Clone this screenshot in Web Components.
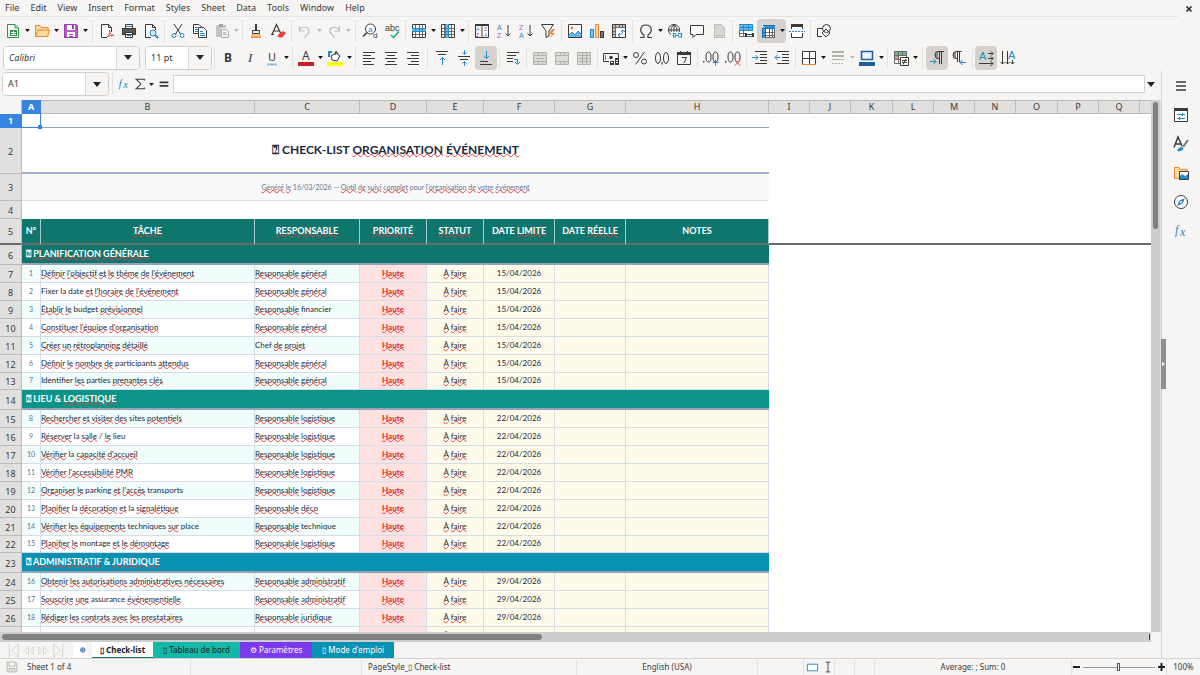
<!DOCTYPE html>
<html lang="en">
<head>
<meta charset="utf-8">
<title>Check-list - Calc</title>
<style>
html, body { margin: 0; height: 100%; }
body { font: 9px/12px "Noto Sans", "Open Sans", sans-serif; color: #3a3a38; background: #f6f5f4; overflow: hidden; }
</style>
</head>
<body>
<calc-window>
  <menu-bar slot="menu"></menu-bar>
  <tool-bar slot="tools" label="Standard">
    <tool-button icon="new" label="New" menu></tool-button>
    <tool-button icon="open" label="Open" menu></tool-button>
    <tool-button icon="save" label="Save" menu></tool-button>
    <tool-sep wide></tool-sep>
    <tool-button icon="pdf" label="Export as PDF"></tool-button>
    <tool-button icon="print" label="Print"></tool-button>
    <tool-button icon="preview" label="Print Preview"></tool-button>
    <tool-sep></tool-sep>
    <tool-button icon="cut" label="Cut"></tool-button>
    <tool-button icon="copy" label="Copy"></tool-button>
    <tool-button icon="paste" label="Paste" menu off></tool-button>
    <tool-sep></tool-sep>
    <tool-button icon="brush" label="Clone Formatting"></tool-button>
    <tool-button icon="clear" label="Clear Formatting"></tool-button>
    <tool-sep></tool-sep>
    <tool-button icon="undo" label="Undo" menu off></tool-button>
    <tool-button icon="redo" label="Redo" menu off></tool-button>
    <tool-sep wide></tool-sep>
    <tool-button icon="find" label="Find and Replace"></tool-button>
    <tool-button icon="spell" label="Spelling"></tool-button>
    <tool-sep></tool-sep>
    <tool-button icon="row" label="Row" menu></tool-button>
    <tool-button icon="column" label="Column" menu></tool-button>
    <tool-sep></tool-sep>
    <tool-button icon="sort" label="Sort"></tool-button>
    <tool-button icon="asc" label="Sort Ascending"></tool-button>
    <tool-button icon="desc" label="Sort Descending"></tool-button>
    <tool-button icon="filter" label="AutoFilter"></tool-button>
    <tool-sep></tool-sep>
    <tool-button icon="image" label="Insert Image"></tool-button>
    <tool-button icon="chart" label="Insert Chart"></tool-button>
    <tool-button icon="pivot" label="Insert Pivot Table"></tool-button>
    <tool-sep></tool-sep>
    <tool-button icon="omega" label="Insert Special Character" menu></tool-button>
    <tool-button icon="link" label="Insert Hyperlink"></tool-button>
    <tool-button icon="comment" label="Insert Comment"></tool-button>
    <tool-button icon="page" label="Headers and Footers" off></tool-button>
    <tool-sep></tool-sep>
    <tool-button icon="area" label="Define Print Area"></tool-button>
    <tool-button icon="freeze" label="Freeze Rows and Columns" menu pressed></tool-button>
    <tool-button icon="split" label="Split Window"></tool-button>
    <tool-sep></tool-sep>
    <tool-button icon="shapes" label="Show Draw Functions"></tool-button>
  </tool-bar>
  <tool-bar slot="tools" label="Formatting">
    <combo-box label="Font Name" value="Calibri" size="name"></combo-box>
    <combo-box label="Font Size" value="11 pt" size="points"></combo-box>
    <tool-sep></tool-sep>
    <tool-button icon="bold" label="Bold"></tool-button>
    <tool-button icon="italic" label="Italic"></tool-button>
    <tool-button icon="underline" label="Underline" menu></tool-button>
    <tool-sep></tool-sep>
    <tool-button icon="fontcolor" label="Font Color" menu></tool-button>
    <tool-button icon="fill" label="Background Color" menu></tool-button>
    <tool-sep></tool-sep>
    <tool-button icon="left" label="Align Left"></tool-button>
    <tool-button icon="center" label="Center Horizontally"></tool-button>
    <tool-button icon="right" label="Align Right"></tool-button>
    <tool-sep wide></tool-sep>
    <tool-button icon="top" label="Align Top"></tool-button>
    <tool-button icon="middle" label="Center Vertically"></tool-button>
    <tool-button icon="bottom" label="Align Bottom" pressed></tool-button>
    <tool-sep></tool-sep>
    <tool-button icon="wrap" label="Wrap Text"></tool-button>
    <tool-sep></tool-sep>
    <tool-button icon="merge" label="Merge and Center Cells" off></tool-button>
    <tool-button icon="merge2" label="Merge Cells" off></tool-button>
    <tool-button icon="merge3" label="Unmerge Cells" off></tool-button>
    <tool-sep></tool-sep>
    <tool-button icon="money" label="Format as Currency" menu></tool-button>
    <tool-button icon="percent" label="Format as Percent"></tool-button>
    <tool-button icon="number" label="Format as Number"></tool-button>
    <tool-button icon="date" label="Format as Date"></tool-button>
    <tool-sep></tool-sep>
    <tool-button icon="adddec" label="Add Decimal Place"></tool-button>
    <tool-button icon="deldec" label="Delete Decimal Place"></tool-button>
    <tool-sep></tool-sep>
    <tool-button icon="indent" label="Increase Indent"></tool-button>
    <tool-button icon="outdent" label="Decrease Indent"></tool-button>
    <tool-sep></tool-sep>
    <tool-button icon="borders" label="Borders" menu></tool-button>
    <tool-button icon="bstyle" label="Border Style" menu off></tool-button>
    <tool-button icon="bcolor" label="Border Color" menu></tool-button>
    <tool-sep></tool-sep>
    <tool-button icon="cond" label="Conditional" menu></tool-button>
    <tool-sep wide></tool-sep>
    <tool-button icon="ltr" label="Left-To-Right" pressed></tool-button>
    <tool-button icon="rtl" label="Right-To-Left"></tool-button>
    <tool-sep></tool-sep>
    <tool-button icon="horiz" label="Text direction from left to right" pressed></tool-button>
    <tool-button icon="vert" label="Text direction from top to bottom"></tool-button>
  </tool-bar>
  <formula-bar></formula-bar>
  <sheet-view></sheet-view>
  <sheet-tabs></sheet-tabs>
  <side-bar slot="side"></side-bar>
  <status-bar slot="status"></status-bar>
</calc-window>

<script>
const K = '#3a3a38', B = '#1e8bcd', G = '#797774';
const s = (c, d, w = 1) => `<path d="${d}" fill="none" stroke="${c}" stroke-width="${w}"/>`;
const f = (c, d) => `<path d="${d}" fill="${c}"/>`;
const glyph = (t, x, y, size, c, font = 'Noto Sans', extra = '') =>
  `<text x="${x}" y="${y}" font-size="${size}" fill="${c}" font-family="${font}, sans-serif" ${extra}>${t}</text>`;
const small = (t, x, y, size, c) => glyph(t, x, y, size, c, 'Liberation Sans');
const GRID = s('#6a6967', 'M1 5.5h14M1 8.5h14M1 11.5h14M4.5 2v12M8.500 2v12M11.5 2v12') + s(K, 'M1.5 1.5h13v13h-13z');
const ZEROS = `<ellipse cx="5.5" cy="7" rx="2.5" ry="5" fill="none" stroke="${K}"/><ellipse cx="12.5" cy="7" rx="2.5" ry="5" fill="none" stroke="${K}"/>` + f(K, 'M0 11h1.5v1.5H0z');

const ICONS = {
  new: f('#fff', 'M2 1h8l4 4v10H2z') + s('#309048', 'M10 1.5H2.5v13h11V5L10 1.5V5h3.5') + f('#309048', 'M5 7h7v6H5z') + s('#fff', 'M6 9.5h5M6 11.5h5M8.5 8v4'),
  open: f('#fbdb9d', 'M1 3h5l1 2h8v9H1z') + s('#ed8733', 'M1.5 13.5v-11H6l1.5 2H14V7M1.5 13.5L4 7h11.5l-2 6.5z'),
  save: f('#b160c0', 'M1 1h12l2 2v12H1z') + f('#fff', 'M4 1.5h8V7H4zM4 9h8v6H4z') + f('#9a3fb0', 'M9 2h2v4H9z') + s('#9a3fb0', 'M1.5 1.5H13l1.5 1.5v11.5h-13zM6 11.5h4M6 13.5h4'),
  pdf: f('#fff', 'M2 1h8l3 3v11H2z') + s(K, 'M12.5 9V4.500l-3-3h-7v13H8M9.5 1.5v3h3') + s('#ed3d3b', 'M8 14c3-2 3-5 2.5-7c0 4 2 5 4.5 5.500c-2-.5-5 0-7 1.5z'),
  print: f('#5a5957', 'M1 5h14v7H1z') + f('#fff', 'M4 1h8v5H4zM4 10h8v5H4z') + s(K, 'M4.5 5V1.5h7V5M1.5 5.5h13v6h-13zM4.5 9.5h7v5h-7z') + f(B, 'M5 3h6v1H5zM6 12h4v1H6z'),
  preview: f('#fff', 'M2 1h8l3 3v11H2z') + s(K, 'M12.5 7V4.5l-3-3h-7v13H8M9.5 1.5v3h3') + `<circle cx="10" cy="10" r="3" fill="#cce6f7" stroke="${B}"/>` + s(B, 'M12 12l3 3', 2),
  cut: s(K, 'M4 1l6.5 10M12 1L5.5 11') + `<circle cx="4" cy="12.5" r="2" fill="none" stroke="${B}"/><circle cx="12" cy="12.5" r="2" fill="none" stroke="${B}"/>`,
  copy: f('#fff', 'M1 1h8v10H1zM6 4h9v11H6z') + s(K, 'M6 10.5H1.5v-9H7L9.5 4M6.5 4.5h5l3 3v7h-8z') + s(B, 'M3 4.500h3M3 6.500h3M3 8.500h3M8 8.500h3M8 10.500h5M8 12.500h5'),
  paste: f('#c8c6c4', 'M2 2h10v12H2z') + f('#f2f2f1', 'M7 5h8v10H7z') + f('#a9a7a5', 'M5 1h4v3H5z') + s('#b4b2b0', 'M7.5 6.5h5l2 2v6h-7zM9 9.5h3M9 11.5h4'),
  brush: f(K, 'M7 1h2v6H7z') + s(K, 'M4.5 7.5h7v3h-7z') + f('#fbdb9d', 'M4 11h8l1 4H3z') + s('#ed8733', 'M4.5 11l-1 3.5h9l-1-3.5M6.5 12v3M9.5 12v3'),
  clear: s(K, 'M2 11.500L6.5 1.5 11 11M3.5 8h6M1 11.5h3', 1.2) + f('#ed3d3b', 'M9 11l4-3 3 2-4 4.500H9L7.500 13z'),
  undo: s('#c0bebb', 'M2.5 3v5h5M2.5 8C4 3 12 3 12 8c0 3-2 4-5 6.5', 1.2),
  redo: s('#c0bebb', 'M13.5 3v5h-5M13.5 8C12 3 4 3 4 8c0 3 2 4 5 6.5', 1.2),
  find: `<circle cx="8.5" cy="6" r="5" fill="#fff" stroke="${K}"/>` + s(K, 'M5 9.500l-4 4', 1.5) + small('a', 6, 9, 8, B) + small('d', 11, 15, 8, K),
  spell: small('abc', 1, 8, 9, K) + s('#1aab76', 'M7 12l2.5 2.5L15 8.500', 1.5),
  row: f('#fff', 'M1 1h14v14H1z') + GRID + f('#6bb6e8', 'M1 5h14v4H1z') + s(B, 'M1 5.5h14M1 8.5h14M4.5 5v4M8.5 5v4M11.5 5v4'),
  column: f('#fff', 'M1 1h14v14H1z') + GRID + f('#6bb6e8', 'M5 1h4v14H5z') + s(B, 'M5.5 1v14M8.5 1v14M5 5.5h4M5 8.5h4M5 11.5h4'),
  sort: f('#fff', 'M1 1h14v14H1z') + f(K, 'M1 1h14v2H1z') + s(K, 'M1.5 1.5h13v13h-13zM8 2v13') + small('A', 2, 8, 5, B) + small('Z', 2, 14, 5, '#a040b0') + small('Z', 10, 8, 5, '#a040b0') + small('A', 10, 14, 5, B),
  asc: small('A', 1, 7, 7, B) + small('Z', 1, 15, 7, '#b160c0') + s(K, 'M12 2v11M9.5 10.5L12 13l2.5-2.5'),
  desc: small('Z', 1, 7, 7, '#b160c0') + small('A', 1, 15, 7, B) + s(K, 'M12 2v11M9.5 10.5L12 13l2.5-2.5'),
  filter: s(K, 'M1.5 1.5h12L9 8v5l-3 1.5V8z') + f('#ed8733', 'M12 6l-3 5h3l-2 4 5-5h-3l3-4z'),
  image: f('#fff', 'M1 1h14v14H1z') + `<circle cx="5" cy="5" r="1.5" fill="#ed8733"/>` + f('#6bb6e8', 'M1 14l4-5 3 3 3-4 4 5v2H1z') + s(K, 'M1.5 1.5h13v13h-13z') + s(B, 'M1 13l4-4 3 3 3-4 4 4'),
  chart: f(B, 'M1 6h4v9H1z') + f('#fbdb9d', 'M6 2h4v13H6z') + s('#ed8733', 'M6.5 1.5h3v13h-3z') + f(K, 'M11 8h4v7h-4z') + f('#83beec', 'M2 7h2v7H2z') + f(G, 'M12 9h2v5h-2z'),
  pivot: f('#fff', 'M1 1h14v14H1z') + f('#c0bebc', 'M1 1h14v3H1zM1 1h3v14H1z') + s('#6a6967', 'M1 4.5h14M4.5 1v14M8.5 1v3M11.5 1v3M1 8.5h3M1 11.5h3') + s(K, 'M1.5 1.5h13v13h-13z') + s(B, 'M7 12c4 0 5-2 5-5M9 10l-2 2 2 2M10 9l2-2 2 2'),
  omega: s(K, 'M2 14.5h4V12C1 9 2 2 8 2s7 7 2 10v2.500h4', 1.2),
  link: `<circle cx="7" cy="7" r="5.5" fill="#fff" stroke="${K}"/>` + s(K, 'M1.5 7h11M7 1.5v11M7 1.5c-4 4-4 7 0 11M7 1.5c4 4 4 7 0 11') + f('#f6f5f4', 'M4 9h12v6H4z') + s(B, 'M9 10.5H6.5V14H9M11 10.5h3.5V14H11M8 12.300h4', 1.2),
  comment: f('#fff', 'M1 2h14v9H6l-3 4v-4H1z') + s(K, 'M1.5 2.5h13v9H7l-3 3v-3H1.5z'),
  page: f('#d9d7d5', 'M3 1h7l4 4v10H3z') + s('#c0bebb', 'M3.5 1.5H10L13.5 5v9.5h-10zM5 12.5h7'),
  area: f('#fff', 'M1 1h14v13H1z') + f('#6bb6e8', 'M1 1h14v6H1z') + s(B, 'M1 4.5h14M5.5 1v6M10.5 1v6M1 7.5h14M1.5 1.5h13v6') + s('#6a6967', 'M1.5 7v6.5h6M5.5 7v6M1 10.5h7') + f(K, 'M7 10h9v4H7z') + f('#fff', 'M9 8h5v3H9zM9 12h5v3H9z') + s(B, 'M9 13.5h5'),
  freeze: f('#fff', 'M3 3h12v12H3z') + s('#6a6967', 'M6 9.5h9M6 12.5h9M9.5 6v9M12.5 6v9M6 14.5h9M14.5 6v9') + f('#3d9ad8', 'M3 2h12v4H3zM2 3h4v12H2z') + s('#1c6fb5', 'M2 2.500h13M2.5 2v13M2 5.500h13M5.5 2v13M9.5 2v4M12.5 2v4M2 9.500h4M2 12.500h4') + s('#bfe0f5', 'M0 0l5 5M5 0L0 5M2.5 0v5'),
  split: f('#fff', 'M2 2h12v12H2z') + f(K, 'M2 1h12v3H2z') + s(K, 'M2.5 4v2M13.5 4v2M2.5 10v4.5h11V10') + `<path d="M0 8.500h16" stroke="${B}" stroke-dasharray="2 1"/>`,
  shapes: s(K, 'M6 13.5H1.5v-8h5') + `<circle cx="10.5" cy="5.5" r="4" fill="none" stroke="${K}"/>` + s(K, 'M6 10l4-4 4 4-4 4z'),
  bold: glyph('B', 4, 12, 12, K, 'Noto Sans', 'font-weight="700"'),
  italic: glyph('I', 6, 12, 13, K, 'Liberation Serif', 'font-style="italic"'),
  underline: glyph('U', 4, 11, 11, K) + s('#83beec', 'M3 14.5h10', 2),
  fontcolor: glyph('A', 4, 10, 12, K) + f('#c9211e', 'M0 12h16v4H0z'),
  fill: f('#fff', 'M6 2l6 3-3 6-6-3z') + s(K, 'M4 6l5-3 4 3-3 5-5-1zM8 5l1-4 2 3') + s(B, 'M5 2H2v5', 2) + f('#ffff00', 'M0 12h16v4H0z'),
  left: s(K, 'M2 2.5h12M2 5.5h8M2 8.5h12M2 11.5h8M2 14.5h11'),
  center: s(K, 'M2 2.5h12M4 5.5h8M2 8.5h12M4 11.5h8M2 14.5h12'),
  right: s(K, 'M2 2.5h12M6 5.5h8M2 8.5h12M6 11.5h8M3 14.5h11'),
  top: s(K, 'M2 1.5h12M4 4.5h8') + s(B, 'M8.5 15V7.5M6 10l2.5-2.5L11 10'),
  middle: s(K, 'M2 6.5h12M4 9.5h8') + s(B, 'M8.5 0v4M6.5 2.500l2 2 2-2M8.5 16v-4M6.5 13.5l2-2 2 2'),
  bottom: s(K, 'M2 11.5h8M2 14.5h12') + s(B, 'M8.5 1v7.5M6 6l2.5 2.5L11 6'),
  wrap: s(K, 'M2 2.5h12M2 5.5h9M2 8.5h6M2 11.5h6') + s(B, 'M9 9.5h3.5v4M10 12l2.5 2.5L15 12'),
  merge: f('#dddbd9', 'M1 2h14v12H1z') + s('#b4b2af', 'M1.5 2.5h13v12h-13zM1 5.5h14M1 11.5h14M6.5 2v3M10.5 2v3M6.5 11v3M10.5 11v3M4 8.5h8'),
  merge2: f('#dddbd9', 'M1 2h14v12H1z') + s('#b4b2af', 'M1.5 2.5h13v12h-13zM1 5.5h14M1 11.5h14M6.5 2v3M10.5 2v3M6.5 11v3M10.5 11v3'),
  merge3: f('#dddbd9', 'M1 2h14v12H1z') + s('#b4b2af', 'M1.5 2.5h13v12h-13zM1 5.5h14M1 11.5h14M6.5 2v12M10.5 2v12M3 8.5h10'),
  money: s(K, 'M15.5 8V3.5H.5v8H6') + `<circle cx="8" cy="7.5" r="1.800" fill="${K}"/>` + s(G, 'M2.5 5v5') + f(K, 'M7 11h4v4H7zM12 8h4v7h-4z') + f('#f6f5f4', 'M8 12h2v1H8zM13 10h2v1h-2zM13 12h2v1h-2z'),
  percent: `<circle cx="4" cy="5" r="2.5" fill="none" stroke="${K}"/><circle cx="12" cy="11.5" r="2.5" fill="none" stroke="${K}"/>` + s(K, 'M12.5 2l-9 12.5'),
  number: `<ellipse cx="4" cy="8" rx="2.5" ry="5.5" fill="none" stroke="${K}"/><ellipse cx="12" cy="8" rx="2.5" ry="5.5" fill="none" stroke="${K}"/>` + f(K, 'M7.500 12h1.2v2.500H7.500z'),
  date: s(K, 'M1.5 2.5h13v12h-13zM4.5 1v3M11.5 1v3M6 7.5h4.5L8 13') + f(K, 'M1 2h14v3H1z'),
  adddec: ZEROS + s(B, 'M12.5 9.5v6M9.5 12.5h6'),
  deldec: ZEROS + s('#ed3d3b', 'M10 10l5 5.5M15 10l-5 5.500'),
  indent: s(K, 'M3 1.5h12M8 4.5h7M8 7.5h7M8 10.5h7M3 13.5h12') + s(B, 'M0 7.5h6M3.5 5L6 7.5 3.5 10'),
  outdent: s(K, 'M3 1.5h12M8 4.5h7M8 7.5h7M8 10.5h7M3 13.5h12') + s(B, 'M6.5 7.5H1M3.5 5L1 7.5 3.5 10'),
  borders: f('#fff', 'M2 2h12v12H2z') + s(K, 'M1.5 14V1.5h13V14M8.5 1v13M1 8.5h14') + s('#ed8733', 'M1 14.5h14'),
  bstyle: s('#b4b2af', 'M2 2h12M2 6h12', 2) + s('#b4b2af', 'M2 9.5h12') + `<path d="M2 13.500h12" stroke="#b4b2af" stroke-dasharray="2 1"/>`,
  bcolor: f('#e8f3fb', 'M3 1h11v8H3z') + s('#1c5f9e', 'M2.5 1.5h11v8h-11z', 1.5) + f('#1c5f9e', 'M0 12h16v4H0z'),
  cond: f('#fff', 'M1 1h13v12H1z') + f('#69c284', 'M1 1h13v4H1z') + f('#f08a86', 'M1 5h5v4H1z') + s('#6a6967', 'M1 5.5h12M1 9.5h7M5.5 1v12M9.5 1v5M1.5 1.5h12v12h-12z') + f('#fff', 'M7 7h8v8H7z') + s(K, 'M7.5 7.5h8v8h-8zM9 10.5h5M9 12.5h5M13 9l-3 5.5'),
  ltr: f('#8b8987', 'M9 2a3 3 0 0 0 0 6z') + s(K, 'M15 1.5H9a3 3.5 0 0 0 0 7h1M10.5 1.5V14M12.5 1.5V14') + s(B, 'M1 11.5h6M4.5 9L7 11.5 4.5 14'),
  rtl: f('#8b8987', 'M5 2a3 3 0 0 0 0 6z') + s(K, 'M10.5 1.5H5a3 3.5 0 0 0 0 7h1M6.5 1.5V12M8.5 1.5V12') + s(B, 'M15 12.5H9M11.5 10L9 12.5l2.5 2.5'),
  horiz: small('A', 1, 10, 11, B) + s(K, 'M10 3.5h5M13 1.5l2 2-2 2M10 8.5h5M13 6.5l2 2-2 2M1 13.5h14M12.5 11l2.5 2.5-2.5 2.5'),
  vert: small('A', 8, 9, 11, B) + s(K, 'M2.5 1v13M.5 12l2 2 2-2M7.5 1v13M5.500 12l2 2 2-2M12.5 10v4M10.5 12l2 2 2-2'),
  fx: glyph('f', 2, 11, 12, B, 'Liberation Serif', 'font-style="italic"') + glyph('x', 7, 13, 12, B, 'Liberation Serif', 'font-style="italic"'),
  sigma: s(K, 'M13 4V2.5H3.5L9 8l-5.5 5.5H13V12', 1.2),
  equals: s(K, 'M3 6h10M3 10h10', 2),
  burger: s(K, 'M3 4h10M3 8h10M3 12h10', 1.6),
  props: f('#fff', 'M1 1h14v14H1z') + f(K, 'M1 1h14v3H1z') + s(K, 'M1.5 1.5h13v13h-13z') + s(B, 'M4 7.5h8M4 11.5h8M9.5 6v3M6.5 10v3'),
  styles: s(K, 'M1 11.500L5 1l4 9M2.500 8h5.500', 1.5) + s(G, 'M15 4l-5 7', 2) + f(B, 'M4 15c2-4 5-5 6-3 1 2-3 4-6 3z'),
  gallery: f('#fbdb9d', 'M1 2h6l1 2h6v10H1z') + s('#ed8733', 'M1.5 14V2.5H6l1.5 2H14V6M1.5 13.5h4') + f('#fff', 'M6 7h9v8H6z') + f(B, 'M6 15v-3l3-3 3 2 3-2v6z') + s(K, 'M6.5 6.5h9v8h-9z'),
  navigator: `<circle cx="8" cy="8" r="6.5" fill="#fff" stroke="${K}"/>` + f(B, 'M12 4L9.5 9.5 4 12 6.5 6.5z') + `<circle cx="8" cy="8" r="1" fill="#fff"/>`,
  disk: s('#a3a19e', 'M1.5 1.5H13l1.5 1.5v11.5h-13zM4 2v5h8V2M4 14v-4h8v4M6 12h4'),
  marks: `<path d="M2.500 4.500h11v7h-11z" fill="#fff" stroke="${B}"/>`,
  cursor: s(K, 'M5 1.5h6M5 14.5h6M8 2v12', 1.2),
  addsheet: f('#fff', 'M0 0h14v16H0z') + `<circle cx="10" cy="8" r="2.5" fill="none" stroke="#2f6fb5"/>` + s('#2f6fb5', 'M10 5v6M7 8h6'),
  first: s('#d3d1ce', 'M3.5 1v14M13 1L6 8l7 7z'),
  prev: s('#d3d1ce', 'M8 4L4 8l4 4zM13 4L9 8l4 4z'),
  next: s('#d3d1ce', 'M3 4l4 4-4 4zM8 4l4 4-4 4z'),
  last: s('#d3d1ce', 'M12.5 1v14M3 1l7 7-7 7z')
};

class Base extends HTMLElement {
  connectedCallback() {
    if (this.shadowRoot) return;
    this.attachShadow({ mode: 'open' }).innerHTML = `<style>
      :host, * { box-sizing: border-box; }
      button { font: inherit; color: inherit; background: none; border: 0; padding: 0; margin: 0; display: flex; align-items: center; justify-content: center; }
      input { font: inherit; color: inherit; border: 0; margin: 0; outline: 0; min-width: 0; }
      svg { display: block; overflow: visible; flex: none; }
      ${this.css()}</style>${this.html()}`;
  }
  icon(name, size = 16) {
    return `<svg width="${size}" height="${size}" viewBox="0 0 16 16" aria-hidden="true">${ICONS[name]}</svg>`;
  }
  arrow(w = 5, c = '#222') {
    return `<svg width="${w}" height="${w > 5 ? 5 : 3}" viewBox="0 0 8 5" aria-hidden="true"><path d="M0 0h8L4 5z" fill="${c}"/></svg>`;
  }
}
const define = (name, css, html) => customElements.define(name, class extends Base {
  css() { return css; }
  html() { return html.call(this); }
});

define('calc-window', `
  :host { display: flex; flex-direction: column; height: 100vh; }
  main { display: flex; flex: 1; min-height: 0; }
  .doc { display: flex; flex-direction: column; flex: 1; min-width: 0; }
`, () => `<slot name="menu"></slot><slot name="tools"></slot>
  <main><div class="doc"><slot></slot></div><slot name="side"></slot></main><slot name="status"></slot>`);

define('menu-bar', `
  :host { display: flex; height: 17px; }
  nav { display: flex; flex: 1; gap: 1px; border-bottom: 1px solid #e6e4e2; }
  nav button { padding: 0 5px; }
  .close { width: 16px; margin: 0 3px; }
`, () => `<nav aria-label="Menu">${['File', 'Edit', 'View', 'Insert', 'Format', 'Styles', 'Sheet', 'Data', 'Tools', 'Window', 'Help']
  .map(m => `<button>${m}</button>`).join('')}</nav>
  <button class="close" aria-label="Close"><svg width="6" height="6" viewBox="0 0 6 6"><path d="M.5.5l5 5M5.500.5l-5 5" stroke="#222" stroke-width="1.500"/></svg></button>`);

define('tool-bar', `
  :host { display: block; }
  div { display: flex; align-items: center; height: 27px; padding-left: 2px; }
`, function () { return `<div role="toolbar" aria-label="${this.getAttribute('label')}"><slot></slot></div>`; });

define('tool-sep', `
  :host { display: flex; justify-content: center; width: 5px; height: 22px; }
  :host([wide]) { width: 7px; }
  i { width: 1px; background: #e4e2e0; }
`, () => '<i></i>');

define('tool-button', `
  :host { display: flex; height: 24px; border-radius: 4px; }
  :host([pressed]) { background: #d5d1cd; }
  .main { width: 22px; }
  .drop { width: 7px; }
`, function () {
  const l = this.getAttribute('label'), off = this.hasAttribute('off');
  return `<button class="main" aria-label="${l}" ${off ? 'disabled' : ''}>${this.icon(this.getAttribute('icon'))}</button>` +
    (this.hasAttribute('menu') ? `<button class="drop" aria-label="${l} options" ${off ? 'disabled' : ''}>${this.arrow(5, off ? '#b8b6b3' : '#111')}</button>` : '');
});

define('combo-box', `
  :host { display: flex; height: 24px; border: 1px solid #d0cdca; border-radius: 4px; overflow: hidden; background: #fff; width: 137px; margin-left: 1px; }
  :host([size=name]) { margin-right: 4px; font-style: italic; }
  :host([size=points]) { width: 67px; }
  :host([size=cell]) { width: 107px; }
  input { flex: 1; padding: 0 5px; background: #fff; }
  button { width: 23px; background: #f6f5f4; border-left: 1px solid #dddad7; }
`, function () {
  const l = this.getAttribute('label');
  return `<input aria-label="${l}" value="${this.getAttribute('value')}"><button aria-label="${l} list">${this.arrow(8)}</button>`;
});

define('formula-bar', `
  :host { display: flex; align-items: center; height: 29px; padding: 0 4px 3px 1px; }
  tool-sep { margin: 0 1px; }
  .i { width: 16px; height: 24px; }
  .d { width: 7px; height: 24px; }
  .e { margin: 0 1px; }
  input { flex: 1; height: 18px; border: 1px solid #d5d2cf; background: #fff; padding: 0 4px; }
  .x { width: 12px; height: 24px; }
`, function () {
  return `<combo-box label="Name Box" value="A1" size="cell"></combo-box><tool-sep></tool-sep>
    <button class="i" aria-label="Function Wizard">${this.icon('fx', 14)}</button>
    <button class="i" aria-label="Select Function">${this.icon('sigma', 14)}</button>
    <button class="d" aria-label="Function list">${this.arrow(5)}</button>
    <button class="i e" aria-label="Formula">${this.icon('equals', 14)}</button>
    <input aria-label="Input line"><button class="x" aria-label="Expand Formula Bar">${this.arrow(8)}</button>`;
});

const KNOWN = new Set('⍰ & / — Fixer la date budget financier Chef participants Identifier parties sites lieu parking transports techniques technique place montage assurance pour CHECK-LIST DATE LIEU NOTES N° 16/03/2026'.split(' '));
const spell = t => t.split(' ').map(w => KNOWN.has(w) ? w : `<u>${w}</u>`).join(' ');

const GENERAL = 'Responsable général', LOGI = 'Responsable logistique', ADMIN = 'Responsable administratif';
const SECTIONS = [
  { title: 'PLANIFICATION GÉNÉRALE', cls: 'teal', date: '15/04/2026', tasks: [
    ["Définir l'objectif et le thème de l'événement", GENERAL],
    ["Fixer la date et l'horaire de l'événement", GENERAL],
    ['Établir le budget prévisionnel', 'Responsable financier'],
    ["Constituer l'équipe d'organisation", GENERAL],
    ['Créer un rétroplanning détaillé', 'Chef de projet'],
    ['Définir le nombre de participants attendus', GENERAL],
    ['Identifier les parties prenantes clés', GENERAL]] },
  { title: 'LIEU & LOGISTIQUE', cls: 'green', date: '22/04/2026', tasks: [
    ['Rechercher et visiter des sites potentiels', LOGI],
    ['Réserver la salle / le lieu', LOGI],
    ["Vérifier la capacité d'accueil", LOGI],
    ["Vérifier l'accessibilité PMR", LOGI],
    ["Organiser le parking et l'accès transports", LOGI],
    ['Planifier la décoration et la signalétique', 'Responsable déco'],
    ['Vérifier les équipements techniques sur place', 'Responsable technique'],
    ['Planifier le montage et le démontage', LOGI]] },
  { title: 'ADMINISTRATIF & JURIDIQUE', cls: 'blue', date: '29/04/2026', tasks: [
    ['Obtenir les autorisations administratives nécessaires', ADMIN],
    ['Souscrire une assurance événementielle', ADMIN],
    ['Rédiger les contrats avec les prestataires', 'Responsable juridique'],
    ['Vérifier les obligations de sécurité', ADMIN]] }
];

define('sheet-view', `
  :host { display: grid; grid-template: minmax(0, 1fr) 10px / minmax(0, 1fr) 10px; flex: 1; min-height: 0; }
  .view { overflow: hidden; background: #fff; }
  table { table-layout: fixed; width: 100%; border-spacing: 0; line-height: 10px; }
  td, th { padding: 0; overflow: hidden; white-space: nowrap; font-weight: 400; height: 18px; }
  thead th { height: 14px; background: #e1e0df; border: solid #bdbbb9; border-width: 1px 1px 1px 0; }
  thead th:last-child { border-right: 0; }
  thead th:first-child { background: #f6f5f4; border-color: #f6f5f4 #bdbbb9 #f6f5f4 #f6f5f4; }
  tbody th { background: #e1e0df; border: solid #bdbbb9; border-width: 0 1px 1px 0; padding-top: 2px; }
  thead th.on, tbody th.on { background: #3584e4; color: #fff; font-weight: 700; border-color: #3584e4; padding: 0; }
  td { font-family: Lato, sans-serif; font-size: 8px; color: #1e293b; }
  u { text-decoration: underline wavy #f03a3a 1px; text-underline-offset: -1px; text-decoration-skip-ink: none; }
  .first > * { height: 14px; border-bottom: 1px solid #94a3b8; }
  .first td:last-child, .title td:last-child, .sub td:last-child { border-bottom-color: #fff; }
  td.active { position: relative; overflow: visible; border: solid #3584e4; border-width: 0 1px 1px 0; }
  td.active::after { content: ""; position: absolute; right: -2px; bottom: -2px; width: 4px; height: 4px; background: #3584e4; }
  .title > * { height: 46px; }
  .title td { text-align: center; font-size: 12px; font-weight: 700; border-bottom: 2px solid #a3b0c4; }
  .sub > * { height: 27px; }
  .sub td { text-align: center; font-size: 7px; color: #64748b; border-bottom: 1px solid #dbe3ec; }
  .sub .band { background: #f8fafc; }
  .head > * { height: 26px; border-bottom: 2px solid #6b6b6b; }
  .head td { text-align: center; font-size: 9px; font-weight: 700; color: #fff; }
  .head .h { background: #0f766e; border-right: 1px solid #a9c9d0; }
  .sec > * { height: 20px; }
  .sec .s { color: #fff; font-size: 9px; font-weight: 700; padding-left: 4px; border-bottom: 2px solid #94a3b8; }
  .teal { background: #0f766e; } .green { background: #0d9488; } .blue { background: #0891b2; }
  .short > * { height: 17px; }
  .task td { border-right: 1px solid #d5dee8; border-bottom: 1px solid #d5dee8; text-align: center; padding-bottom: 2px; }
  .task td:last-child { border: 0; }
  .task .t { text-align: left; }
  .task.odd .t, .task.odd .n { background: #f0fdfa; }
  .task .n { color: #64748b; font-size: 7px; }
  .task .p { background: #fee2e2; color: #dc2626; font-weight: 700; }
  .task .y { background: #fffbeb; }
  .bar { background: #cdcdcd; display: flex; }
  .bar i { background: #808080; border-radius: 3px; }
  .vb { padding: 2px; border-right: 1px solid #e4e2e0; }
  .vb i { width: 100%; height: 24%; }
  .hb { padding: 2px 1px 2px 2px; justify-content: space-between; }
  .hb i { width: 47%; }
  .hb b { width: 1px; background: #444; }
`, function () {
  const cols = [22, 19, 214, 105, 67, 57, 71, 71, 143, 41, 41, 42, 41, 41, 41, 42, 41, 41];
  const letters = [...'ABCDEFGHIJKLMNOPQ'];
  let r = 5, n = 0;
  const row = (cls, cells) => `<tr class="${cls}"><th scope="row">${++r}</th>${cells}</tr>`;
  const body = SECTIONS.map(sec => row('sec', `<td class="s ${sec.cls}" colspan="8">${spell('⍰ ' + sec.title)}</td><td colspan="10"></td>`) +
    sec.tasks.map(([t, who], i) => {
      n++;
      const short = sec.tasks.length > 4 && i === sec.tasks.length - 1;
      return row(`task ${i % 2 ? '' : 'odd'} ${short ? 'short' : ''}`,
        `<td class="n">${n}</td><td class="t">${spell(t)}</td><td class="t">${spell(who)}</td><td class="p">${spell('Haute')}</td>
         <td class="y"><u>À</u> <u>faire</u></td><td class="y">${sec.date}</td><td class="y"></td><td class="y"></td><td colspan="10"></td>`);
    }).join('')).join('');
  return `<div class="view"><table>
    <colgroup>${cols.map(w => `<col style="width:${w}px">`).join('')}<col></colgroup>
    <thead><tr><th></th>${letters.map((l, i) => `<th scope="col" class="${i ? '' : 'on'}">${l}</th>`).join('')}<th></th></tr></thead>
    <tbody>
    <tr class="first"><th scope="row" class="on">1</th><td class="active"></td><td colspan="7"></td><td colspan="10"></td></tr>
    <tr class="title"><th scope="row">2</th><td colspan="8">${spell('⍰ CHECK-LIST ORGANISATION ÉVÉNEMENT')}</td><td colspan="10"></td></tr>
    <tr class="sub"><th scope="row">3</th><td class="band" colspan="8">${spell("Généré le 16/03/2026 — Outil de suivi complet pour l'organisation de votre événement")}</td><td colspan="10"></td></tr>
    <tr><th scope="row">4</th><td colspan="18"></td></tr>
    <tr class="head"><th scope="row">5</th>${['N°', 'TÂCHE', 'RESPONSABLE', 'PRIORITÉ', 'STATUT', 'DATE LIMITE', 'DATE RÉELLE', 'NOTES'].map(h => `<td class="h">${spell(h)}</td>`).join('')}<td colspan="10"></td></tr>
    ${body}</tbody></table></div>
    <div class="bar vb"><i></i></div><div class="bar hb"><i></i><b></b></div>`;
});

define('sheet-tabs', `
  :host { display: flex; height: 16px; padding-left: 6px; font-size: 8px; }
  .nav { width: 15px; }
  .add { width: 14px; margin: 0 4px 0 8px; }
  .tab { padding: 0 10px; color: #fff; border-bottom: 1px solid transparent; }
  .tab.c { padding: 0 8px; background: #fff; color: #1a1a1a; font-weight: 700; border-bottom-color: #0f766e; }
  .tab.t { background: #14b8a6; color: #1a1a1a; } .p { background: #7c3aed; } .m { background: #0891b2; }
`, function () {
  return ['first', 'prev', 'next', 'last'].map(i => `<button class="nav" aria-label="${i} sheet">${this.icon(i, 15)}</button>`).join('') +
    `<button class="add" aria-label="Add Sheet">${this.icon('addsheet', 14)}</button>
    <button class="tab c">▯ Check-list</button><button class="tab t">▯ Tableau de bord</button><button class="tab p">⚙ Paramètres</button><button class="tab m">▯ Mode d'emploi</button>`;
});

define('side-bar', `
  :host { display: flex; flex-direction: column; align-items: center; position: relative; width: 39px; border-left: 1px solid #d5d2cf; }
  button { width: 24px; height: 29px; }
  .grip { position: absolute; left: -1px; top: 268px; width: 5px; height: 50px; background: #8f8f8f; }
`, function () {
  return [['burger', 'Sidebar Settings'], ['props', 'Properties'], ['styles', 'Styles'], ['gallery', 'Gallery'], ['navigator', 'Navigator'], ['fx', 'Functions']]
    .map(([i, l]) => `<button aria-label="${l}">${this.icon(i)}</button>`).join('') +
    `<button class="grip" aria-label="Hide sidebar"><svg width="3" height="4" viewBox="0 0 3 4"><path d="M0 0l3 2-3 2z" fill="#fff"/></svg></button>`;
});

define('status-bar', `
  :host { display: grid; height: 17px; border-top: 1px solid #d5d2cf; font-size: 8px;
    grid-template-columns: 191fr 171fr 215fr 181fr 46fr 31fr 20fr 20fr 197fr 95fr 33fr; }
  div { display: flex; align-items: center; justify-content: center; border-right: 1px solid #e4e2e0; min-width: 0; white-space: nowrap; gap: 2px; }
  div:last-child { border: 0; }
  .l { justify-content: flex-start; padding-left: 6px; gap: 9px; }
  .e { justify-content: flex-end; }
  input { flex: 1; appearance: none; background: linear-gradient(#9a9a9a, #9a9a9a) center / 100% 1px no-repeat; height: 10px; }
  input::-webkit-slider-thumb { appearance: none; width: 3px; height: 8px; border: 1px solid #555; background: #f6f5f4; }
`, function () {
  return `<div class="l">${this.icon('disk', 12)}<span>Sheet 1 of 4</span></div><div></div>
    <div class="l">PageStyle_▯ Check-list</div><div>English (USA)</div><div></div>
    <div class="e">${this.icon('marks', 15)}${this.icon('cursor', 12)}</div><div></div><div></div>
    <div>Average: ; Sum: 0</div>
    <div><button aria-label="Zoom Out"><svg width="9" height="8" viewBox="0 0 9 8"><path d="M1 4h7" stroke="#222" stroke-width="2"/></svg></button>
    <input type="range" aria-label="Zoom" value="49">
    <button aria-label="Zoom In"><svg width="9" height="8" viewBox="0 0 9 8"><path d="M1 4h7M4.5 0v8" stroke="#222" stroke-width="2"/></svg></button></div>
    <div>100%</div>`;
});
</script>
</body>
</html>
